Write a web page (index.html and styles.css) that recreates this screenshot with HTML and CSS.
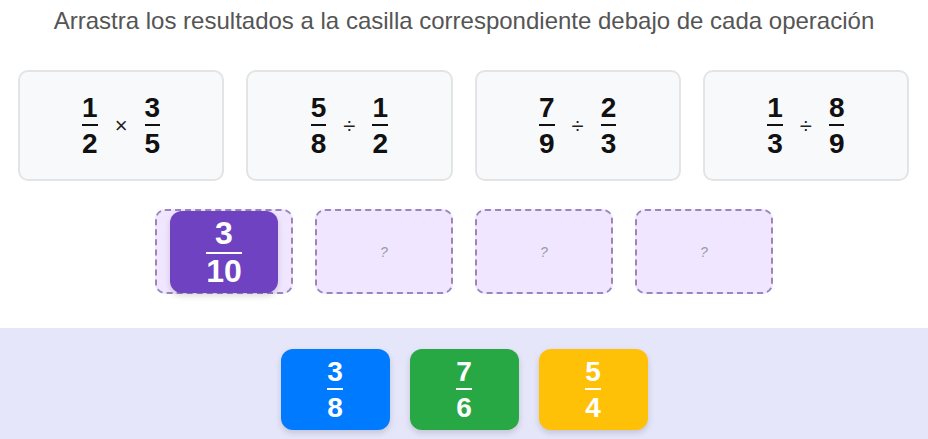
FILE: index.html
```html
<!DOCTYPE html>
<html lang="es">
<head>
<meta charset="utf-8">
<title>Fracciones</title>
<link rel="stylesheet" href="styles.css">
</head>
<body>
<h1 class="title">Arrastra los resultados a la casilla correspondiente debajo de cada operación</h1>

<div class="ops">
  <div class="op-card">
    <span class="frac"><span class="num">1</span><span class="bar"></span><span class="den">2</span></span>
    <span class="op">×</span>
    <span class="frac"><span class="num">3</span><span class="bar"></span><span class="den">5</span></span>
  </div>
  <div class="op-card">
    <span class="frac"><span class="num">5</span><span class="bar"></span><span class="den">8</span></span>
    <span class="op">÷</span>
    <span class="frac"><span class="num">1</span><span class="bar"></span><span class="den">2</span></span>
  </div>
  <div class="op-card">
    <span class="frac"><span class="num">7</span><span class="bar"></span><span class="den">9</span></span>
    <span class="op">÷</span>
    <span class="frac"><span class="num">2</span><span class="bar"></span><span class="den">3</span></span>
  </div>
  <div class="op-card">
    <span class="frac"><span class="num">1</span><span class="bar"></span><span class="den">3</span></span>
    <span class="op">÷</span>
    <span class="frac"><span class="num">8</span><span class="bar"></span><span class="den">9</span></span>
  </div>
</div>

<div class="zones">
  <div class="zone">
    <div class="chip chip-purple chip-big">
      <span class="frac"><span class="num">3</span><span class="bar"></span><span class="den">10</span></span>
    </div>
  </div>
  <div class="zone"><span class="q">?</span></div>
  <div class="zone"><span class="q">?</span></div>
  <div class="zone"><span class="q">?</span></div>
</div>

<div class="tray">
  <div class="chip chip-blue">
    <span class="frac"><span class="num">3</span><span class="bar"></span><span class="den">8</span></span>
  </div>
  <div class="chip chip-green">
    <span class="frac"><span class="num">7</span><span class="bar"></span><span class="den">6</span></span>
  </div>
  <div class="chip chip-yellow">
    <span class="frac"><span class="num">5</span><span class="bar"></span><span class="den">4</span></span>
  </div>
</div>
</body>
</html>
```

FILE: styles.css
```css
html, body {
  margin: 0;
  padding: 0;
  background: #ffffff;
  font-family: "Liberation Sans", Arial, sans-serif;
  overflow: hidden;
}

.title {
  margin: 0;
  padding-top: 7px;
  font-size: 24px;
  line-height: 28px;
  font-weight: normal;
  color: #555555;
  text-align: center;
}

.ops {
  display: grid;
  grid-template-columns: repeat(4, 1fr);
  gap: 22px;
  padding: 0 19px 0 18px;
  margin-top: 35px;
}

.op-card {
  box-sizing: border-box;
  height: 111px;
  background: #f8f9fa;
  border: 2px solid #e3e4e6;
  border-radius: 10px;
  display: flex;
  align-items: center;
  justify-content: center;
  gap: 17px;
}

.frac {
  display: inline-flex;
  flex-direction: column;
  align-items: stretch;
  text-align: center;
  font-weight: bold;
  line-height: 1;
}

.op-card .frac {
  font-size: 28px;
  color: #111111;
}

.bar {
  display: block;
  height: 2px;
  background: currentColor;
  margin: 2px 0 4px;
}

.op {
  font-size: 22px;
  color: #222222;
  line-height: 1;
}

.zones {
  display: flex;
  justify-content: center;
  gap: 22px;
  margin-top: 28px;
}

.zone {
  box-sizing: border-box;
  width: 138px;
  height: 85px;
  background: #f0e6ff;
  border: 2px dashed #9a85be;
  border-radius: 10px;
  display: flex;
  align-items: center;
  justify-content: center;
}

.q {
  font-size: 14px;
  font-style: italic;
  color: #9a9a9a;
}

.chip {
  box-sizing: border-box;
  width: 109px;
  height: 81px;
  border-radius: 12px;
  display: flex;
  align-items: center;
  justify-content: center;
  color: #ffffff;
  box-shadow: 0 3px 6px rgba(0, 0, 0, 0.15);
}

.chip .frac {
  font-size: 28px;
}

.chip-big {
  width: 108px;
  height: 82px;
}

.chip-big .frac {
  font-size: 32px;
}

.chip-big .bar {
  margin: 3px 0 1px;
}

.chip-purple { background: #6f42c1; }
.chip-blue { background: #007bff; }
.chip-green { background: #28a745; }
.chip-yellow { background: #ffc107; }

.tray {
  margin-top: 34px;
  background: #e6e6fa;
  display: flex;
  justify-content: center;
  gap: 20px;
  padding: 21px 0 9px;
}
```
